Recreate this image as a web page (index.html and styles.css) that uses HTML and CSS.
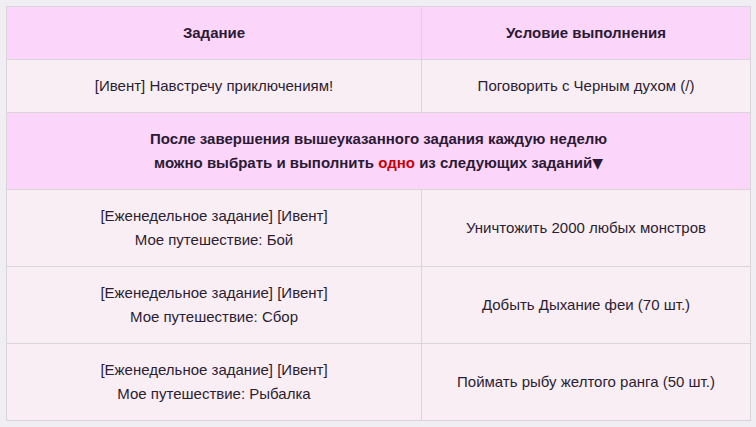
FILE: index.html
```html
<!DOCTYPE html>
<html>
<head>
<meta charset="utf-8">
<link rel="stylesheet" href="styles.css">
</head>
<body>
<table class="quest">
  <tr class="head">
    <th class="c1">Задание</th>
    <th class="c2">Условие выполнения</th>
  </tr>
  <tr class="row">
    <td>[Ивент] Навстречу приключениям!</td>
    <td>Поговорить с Черным духом (/)</td>
  </tr>
  <tr class="head">
    <th colspan="2">После завершения вышеуказанного задания каждую неделю<br>можно выбрать и выполнить <span class="hl">одно</span> из следующих заданий<span class="tri">▼</span></th>
  </tr>
  <tr class="row">
    <td>[Еженедельное задание] [Ивент]<br>Мое путешествие: Бой</td>
    <td>Уничтожить 2000 любых монстров</td>
  </tr>
  <tr class="row">
    <td>[Еженедельное задание] [Ивент]<br>Мое путешествие: Сбор</td>
    <td>Добыть Дыхание феи (70 шт.)</td>
  </tr>
  <tr class="row">
    <td>[Еженедельное задание] [Ивент]<br>Мое путешествие: Рыбалка</td>
    <td>Поймать рыбу желтого ранга (50 шт.)</td>
  </tr>
</table>
</body>
</html>
```
FILE: styles.css
```css
html, body {
  margin: 0;
  background: #f0eef2;
}
body {
  padding: 6px 6px;
  font-family: "Liberation Sans", Arial, sans-serif;
  font-size: 15px;
  color: #2b1d33;
}
.quest {
  border-collapse: collapse;
  width: 745px;
  table-layout: fixed;
}
.quest th, .quest td {
  border: 1px solid #d9d5da;
  padding: 14px 10px;
  line-height: 24px;
  text-align: center;
  vertical-align: middle;
}
.quest .c1 { width: 394px; }
.head th {
  background: #fcd5fa;
  font-weight: bold;
  color: #2a1a35;
}
.row td {
  background: #f9eef4;
  font-weight: normal;
}
.hl {
  color: #c80000;
}
.tri {
  font-family: "DejaVu Sans", sans-serif;
  font-size: 14px;
}
```
